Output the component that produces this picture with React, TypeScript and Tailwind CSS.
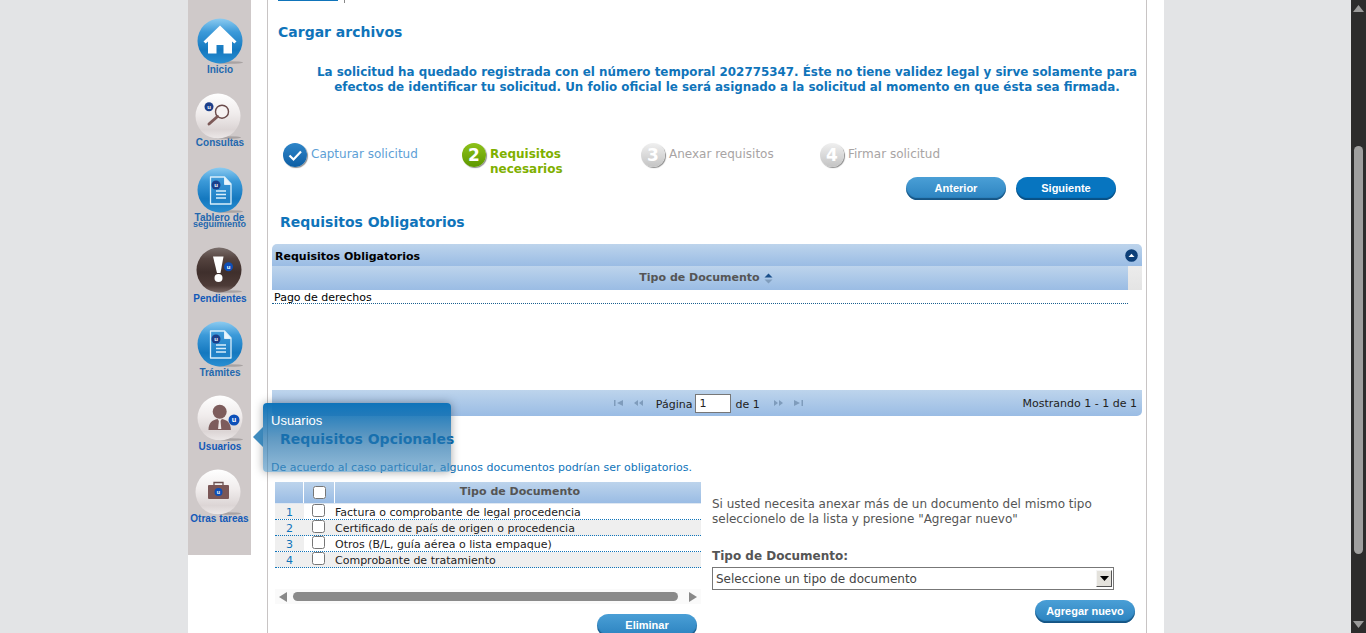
import React from "react";

function Badge({ x, y, r = 5, bright }: { x: number; y: number; r?: number; bright?: boolean }) {
  return (
    <g>
      <circle cx={x} cy={y} r={r} fill={bright ? "#0d4fb8" : "#1c3f8a"} />
      <text x={x} y={y + 2.4} textAnchor="middle" fontSize={r * 1.35} fontWeight="700" fill="#fff" fontFamily="Liberation Sans, sans-serif">u</text>
    </g>
  );
}

function Orb({ id, kind, children }: { id: string; kind: "blue" | "pearl" | "dark"; children?: React.ReactNode }) {
  const stops =
    kind === "blue"
      ? [["0", "#8ccbf0"], ["0.3", "#3c9ad9"], ["0.7", "#1478bf"], ["1", "#2a8fd2"]]
      : kind === "pearl"
      ? [["0", "#ffffff"], ["0.45", "#f0ecec"], ["0.8", "#dcd5d5"], ["1", "#ece8e8"]]
      : [["0", "#7a6e6b"], ["0.25", "#54433f"], ["0.55", "#3f2f2c"], ["0.85", "#4d3b37"], ["1", "#7d6a66"]];
  return (
    <svg width="48" height="48" viewBox="0 0 48 48" className="shrink-0">
      <defs>
        <linearGradient id={id} x1="0" y1="0" x2="0" y2="1">
          {stops.map(([o, c]) => (
            <stop key={o} offset={o} stopColor={c} />
          ))}
        </linearGradient>
      </defs>
      <ellipse cx="33" cy="45.5" rx="14" ry="1.3" fill="#8f8a8a" opacity="0.6" />
      <circle cx="24" cy="24" r="22.5" fill={`url(#${id})`} />
      {children}
    </svg>
  );
}

const Doc = () => (
  <g>
    <path d="M14.500 11h14l6.500 7V38H14.500z" fill="#2f8ed2" fillOpacity="0.4" stroke="#d9eefa" strokeWidth="1.3" strokeLinejoin="round" />
    <path d="M28.500 11v7.500H35" fill="#e8f5fc" stroke="#d9eefa" strokeWidth="1" />
    <path d="M20 25h10M20 28.500h10M20 32h10" stroke="#d9eefa" strokeWidth="1.3" />
    <Badge x={20} y={19} r={4.5} />
  </g>
);

const items: { cls: string; orb: string; label: React.ReactNode; labelCls: string; node: React.ReactNode }[] = [
  {
    cls: "h-[75px]",
    orb: "",
    labelCls: "mt-0 ml-[1px] text-[#2468ae]",
    label: "Inicio",
    node: (
      <Orb id="o1" kind="blue">
        <path d="M24 8.500 7.500 24.500l2.200 2L12 24.400V36.500h8.500V28h7v8.500H36V24.400l2.300 2.100 2.200-2z" fill="#fff" />
      </Orb>
    ),
  },
  {
    cls: "h-[74px]",
    orb: "-translate-x-[2px]",
    labelCls: "-mt-[2px] ml-[1px] text-[#2468ae]",
    label: "Consultas",
    node: (
      <Orb id="o2" kind="pearl">
        <circle cx="28" cy="19.700" r="6.500" fill="#f6f2f2" stroke="#6a4a4a" strokeWidth="1.4" />
        <path d="M23.500 24.500 15 32" stroke="#7d5a58" strokeWidth="3" strokeLinecap="round" />
        <Badge x={15} y={14.700} r={4.5} />
      </Orb>
    ),
  },
  {
    cls: "h-[80px]",
    orb: "",
    labelCls: "mt-0 text-[#2468ae]",
    label: (
      <>
        <span className="block leading-[7px]">Tablero de</span>
        <span className="block leading-[7px] text-[9px]">seguimiento</span>
      </>
    ),
    node: (
      <Orb id="o3" kind="blue">
        <Doc />
      </Orb>
    ),
  },
  {
    cls: "h-[74px]",
    orb: "-translate-x-[1px]",
    labelCls: "mt-0 ml-[1px] text-[#1259b8]",
    label: "Pendientes",
    node: (
      <Orb id="o4" kind="dark">
        <path d="M18 10.500h10.500L25.500 27h-3.500z" fill="#fff" />
        <circle cx="23.500" cy="32" r="4" fill="#fff" />
        <Badge x={33.500} y={20.700} r={4.5} bright />
      </Orb>
    ),
  },
  {
    cls: "h-[74px]",
    orb: "",
    labelCls: "mt-0 ml-[1px] text-[#2468ae]",
    label: "Trámites",
    node: (
      <Orb id="o5" kind="blue">
        <Doc />
      </Orb>
    ),
  },
  {
    cls: "h-[74px]",
    orb: "",
    labelCls: "mt-0 ml-[1px] text-[#1259b8]",
    label: "Usuarios",
    node: (
      <Orb id="o6" kind="pearl">
        <circle cx="23.700" cy="17.700" r="7" fill="#7d5c5c" />
        <path d="M12.500 36c0-7 3.500-10 9-11l2.200 3 2.200-3c5.500 1 9 4 9 11z" fill="#7d5c5c" />
        <path d="M22.900 26.500h1.600l.8 8.500h-3.200z" fill="#efe9e9" />
        <Badge x={38} y={26} r={5.5} bright />
      </Orb>
    ),
  },
  {
    cls: "h-[60px]",
    orb: "-translate-x-[2px]",
    labelCls: "-mt-[2px] text-[#1259b8]",
    label: "Otras tareas",
    node: (
      <Orb id="o7" kind="pearl">
        <path d="M20 17v-2.500h9V17" fill="none" stroke="#6a5050" strokeWidth="1.3" />
        <rect x="14" y="17" width="21" height="14" rx="1" fill="#7a5656" />
        <Badge x={24.500} y={24} r={4} bright />
      </Orb>
    ),
  },
];

function Sidebar() {
  return (
    <div className="w-[63px] h-[555px] shrink-0 bg-[#cfc9c9] pt-[17px] flex flex-col font-['Liberation_Sans',sans-serif]">
      {items.map((it, i) => (
        <div key={i} className={`${it.cls} flex flex-col items-center`}>
          <div className={`h-[48px] ${it.orb}`}>{it.node}</div>
          <div className={`${it.labelCls} text-center text-[10px] leading-[10px] font-bold whitespace-nowrap`}>{it.label}</div>
        </div>
      ))}
    </div>
  );
}

function StepDot({ bg, children }: { bg: string; children: React.ReactNode }) {
  return (
    <div className={`w-[24px] h-[24px] shrink-0 rounded-full ${bg} flex items-center justify-center text-white font-bold text-[17px] leading-none shadow-[1px_1px_1px_rgba(0,0,0,0.45)]`}>
      {children}
    </div>
  );
}

function Steps() {
  return (
    <div className="h-[34px] pl-[15px] flex">
      <div className="w-[179px] flex gap-[4px]">
        <StepDot bg="bg-gradient-to-b from-[#2f86c9] to-[#0b5ea4]">
          <svg width="16" height="16" viewBox="0 0 16 16">
            <path d="M2.500 8.500 6.500 12.500 14 4.500" fill="none" stroke="#fff" strokeWidth="2.200" />
          </svg>
        </StepDot>
        <span className="text-[12px] leading-[16px] pt-[3px] text-[#5e9fd6]">Capturar solicitud</span>
      </div>
      <div className="w-[179px] flex gap-[4px]">
        <StepDot bg="bg-gradient-to-b from-[#8ec21a] to-[#5e9800]">2</StepDot>
        <span className="text-[12px] leading-[15px] pt-[4px] font-bold text-[#7fb000]">Requisitos<br />necesarios</span>
      </div>
      <div className="w-[179px] flex gap-[4px]">
        <StepDot bg="bg-gradient-to-b from-[#f0f0f0] to-[#c4c4c4]">3</StepDot>
        <span className="text-[12px] leading-[16px] pt-[3px] text-[#a8a4a4]">Anexar requisitos</span>
      </div>
      <div className="w-[179px] flex gap-[4px]">
        <StepDot bg="bg-gradient-to-b from-[#f0f0f0] to-[#c4c4c4]">4</StepDot>
        <span className="text-[12px] leading-[16px] pt-[3px] text-[#a8a4a4]">Firmar solicitud</span>
      </div>
    </div>
  );
}

function Pill({ dark, children }: { dark?: boolean; children: React.ReactNode }) {
  return (
    <div
      className={`w-[100px] h-[23px] shrink-0 rounded-full flex items-center justify-center text-white font-bold text-[11px] font-['Liberation_Sans',sans-serif] shadow-[inset_0_-2px_1px_rgba(10,60,100,0.65)] ${
        dark ? "bg-[#0775c0]" : "bg-gradient-to-b from-[#4a9fd6] to-[#2a82bf]"
      }`}
    >
      {children}
    </div>
  );
}

function PagerIcon({ flip, double }: { flip?: boolean; double?: boolean }) {
  return (
    <svg width="12" height="8" viewBox="0 0 12 8" className={flip ? "-scale-x-100" : ""}>
      {double ? (
        <path d="M1 4l4-3v6zM6 4l4-3v6z" fill="#7f9cbc" />
      ) : (
        <path d="M1 1h1.500v6H1zM4 4l6-3v6z" fill="#7f9cbc" />
      )}
    </svg>
  );
}

function RequiredGrid() {
  return (
    <div className="mx-[4px] mt-[12px] h-[172px] flex flex-col">
      <div className="h-[22px] rounded-t-[5px] bg-gradient-to-b from-[#bdd4ec] to-[#9abce4] flex items-center justify-between pl-[3px] pr-[4px]">
        <span className="mt-[4px] font-bold text-[11px] text-black">Requisitos Obligatorios</span>
        <svg width="13" height="13" viewBox="0 0 13 13">
          <circle cx="6.500" cy="6.500" r="6.300" fill="#0d3f78" />
          <path d="M3.500 8h6L6.500 4.800z" fill="#fff" />
        </svg>
      </div>
      <div className="h-[24px] flex">
        <div className="flex-1 pl-[12px] bg-gradient-to-b from-[#bdd4ec] to-[#9abce4] flex items-center justify-center gap-[4px] font-bold text-[11px] text-[#555]">
          <span>Tipo de Documento</span>
          <svg width="9" height="11" viewBox="0 0 9 11">
            <path d="M.5 4.500h8L4.500.5z" fill="#1a4f8a" />
            <path d="M.5 6.500h8l-4 4z" fill="#7f9cbc" />
          </svg>
        </div>
        <div className="w-[14px] bg-gradient-to-b from-[#ececec] to-[#e4e4e4]" />
      </div>
      <div className="h-[100px]">
        <div className="mr-[14px] h-[14px] pt-[1px] leading-[13px] pl-[2px] border-b border-dotted border-[#1a5f8f] text-[11px] text-black">Pago de derechos</div>
      </div>
      <div className="h-[26px] rounded-b-[5px] bg-gradient-to-b from-[#bdd4ec] to-[#9abce4] flex items-center text-[11px] text-[#222] pr-[5px]">
        <div className="flex-1 flex items-center justify-center pl-[72px] gap-[8px]">
          <PagerIcon />
          <PagerIcon double />
          <span className="ml-[3px] mt-[4px]">Página</span>
          <div className="-ml-[5px] w-[36px] h-[19px] bg-white border border-[#777] pl-[3px] leading-[18px]">1</div>
          <span className="-ml-[4px] mr-[4px] mt-[4px]">de 1</span>
          <PagerIcon flip double />
          <PagerIcon flip />
        </div>
        <span className="-ml-[50px] mt-[2px]">Mostrando 1 - 1 de 1</span>
      </div>
    </div>
  );
}

const docs = ["Factura o comprobante de legal procedencia", "Certificado de país de origen o procedencia", "Otros (B/L, guía aérea o lista empaque)", "Comprobante de tratamiento"];

function OptionalTable() {
  return (
    <div className="ml-[7px] w-[426px] shrink-0">
      <div className="h-[22px] flex gap-[1px] bg-white font-bold text-[11px] text-[#555] border-b border-[#dfe8f2]">
        <div className="w-[28px] bg-gradient-to-b from-[#bdd4ec] to-[#9abce4]" />
        <div className="w-[30px] bg-gradient-to-b from-[#bdd4ec] to-[#9abce4] flex items-center justify-center">
          <input type="checkbox" className="m-0 w-[13px] h-[13px]" />
        </div>
        <div className="flex-1 pl-[4px] bg-gradient-to-b from-[#bdd4ec] to-[#9abce4] flex items-center justify-center">Tipo de Documento</div>
      </div>
      {docs.map((d, i) => (
        <div key={d} className={`h-[16px] flex items-center border-b border-dotted border-[#0f74ba] text-[11px] text-[#222] ${i % 2 ? "bg-[#efefef]" : "bg-white"}`}>
          <div className="w-[29px] h-full bg-[#efefef] text-center text-[#0f74ba] leading-[18px]">{i + 1}</div>
          <div className="w-[30px] h-full flex justify-center pr-[2px]">
            <input type="checkbox" className="m-0 w-[13px] h-[13px]" />
          </div>
          <div className="mt-[2px] leading-[16px] pl-[1px]">{d}</div>
        </div>
      ))}
      <div className="mt-[21px] h-[15px] bg-[#fafafa] flex items-center px-[4px] gap-[5px]">
        <svg width="9" height="10" viewBox="0 0 9 10"><path d="M8 0v10L0 5z" fill="#888" /></svg>
        <div className="flex-1 h-[9px] mr-[5px] rounded-full bg-[#8a8a8a]" />
        <svg width="9" height="10" viewBox="0 0 9 10"><path d="M1 0v10l8-5z" fill="#888" /></svg>
      </div>
      <div className="mt-[10px] flex justify-end pr-[4px]">
        <Pill>Eliminar</Pill>
      </div>
    </div>
  );
}

function RightPanel() {
  return (
    <div className="ml-[11px] w-[423px] pt-[15px] text-[12px] text-[#555]">
      <div className="leading-[15px]">
        Si usted necesita anexar más de un documento del mismo tipo
        <br />
        seleccionelo de la lista y presione "Agregar nuevo"
      </div>
      <div className="mt-[21px] font-bold text-[12px] leading-[16px]">Tipo de Documento:</div>
      <div className="mt-[3px] w-[402px] h-[23px] border border-[#777] bg-white flex items-center justify-between pl-[3px] pr-[1px] text-[12px] text-[#444]">
        <span>Seleccione un tipo de documento</span>
        <div className="w-[16px] h-[17px] bg-[#e4e2dc] border border-t-[#f5f5f5] border-l-[#f5f5f5] border-r-[#555] border-b-[#555] flex items-center justify-center">
          <svg width="9" height="5" viewBox="0 0 9 5"><path d="M0 0h9L4.500 5z" fill="#000" /></svg>
        </div>
      </div>
      <div className="mt-[10px] w-[423px] flex justify-end">
        <Pill>Agregar nuevo</Pill>
      </div>
    </div>
  );
}

function Tooltip() {
  return (
    <div className="absolute left-[75px] top-[403px] w-[188px] h-[69px] rounded-[4px] bg-gradient-to-b from-[#0f74ba] via-[#1a6da8]/70 to-[#4a90c0]/60 shadow-[0_0_10px_rgba(0,0,0,0.35)] pl-[8px] pt-[10px] text-[13px] leading-[16px] text-white font-['Liberation_Sans',sans-serif]">
      Usuarios
      <div className="absolute -left-[10px] top-[24px] w-0 h-0 border-y-[10px] border-y-transparent border-r-[10px] border-r-[#1f78b4]/85" />
    </div>
  );
}

export default function App() {
  return (
    <div className="relative w-full h-[633px] overflow-hidden bg-[#e3e4e6] flex font-['DejaVu_Sans',sans-serif]">
      <div className="relative ml-[188px] w-[976px] h-[633px] bg-white flex shrink-0">
        <Sidebar />
        <div className="ml-[16px] w-[880px] h-[760px] border-x border-[#c8c4c4] flex flex-col">
          <div className="h-[3px] pl-[10px] flex gap-[6px]">
            <div className="w-[60px] h-[1px] bg-[#0f74ba]" />
            <div className="w-[1px] h-[3px] bg-[#888]" />
          </div>
          <div className="mt-[19px] ml-[10px] h-[20px] font-bold text-[14px] leading-[20px] text-[#0f74ba]">Cargar archivos</div>
          <div className="mt-[23px] pl-[40px] h-[30px] text-center font-bold text-[11.9px] leading-[15px] text-[#0f74ba] whitespace-nowrap">
            La solicitud ha quedado registrada con el número temporal 202775347. Éste no tiene validez legal y sirve solamente para
            <br />
            efectos de identificar tu solicitud. Un folio oficial le será asignado a la solicitud al momento en que ésta sea firmada.
          </div>
          <div className="h-[48px]" />
          <Steps />
          <div className="h-[23px] flex justify-end gap-[10px] pr-[30px]">
            <Pill>Anterior</Pill>
            <Pill dark>Siguiente</Pill>
          </div>
          <div className="mt-[12px] ml-[12px] h-[20px] font-bold text-[14px] leading-[20px] text-[#0f74ba]">Requisitos Obligatorios</div>
          <RequiredGrid />
          <div className="mt-[13px] ml-[12px] h-[20px] font-bold text-[14px] leading-[20px] text-[#0f74ba]">Requisitos Opcionales</div>
          <div className="mt-[12px] ml-[3px] h-[14px] text-[11px] leading-[14px] text-[#0f74ba]">De acuerdo al caso particular, algunos documentos podrían ser obligatorios.</div>
          <div className="flex mt-[7px]">
            <OptionalTable />
            <RightPanel />
          </div>
        </div>
        <Tooltip />
      </div>
      <div className="ml-auto w-[15px] h-[633px] shrink-0 bg-[#2c2c2c] flex flex-col items-center">
        <svg width="11" height="7" viewBox="0 0 11 7" className="mt-[5px]"><path d="M0 7 5.500 0 11 7z" fill="#9a9a9a" /></svg>
        <div className="mt-[134px] w-[9px] h-[408px] rounded-[5px] bg-[#9f9f9f]" />
        <svg width="11" height="7" viewBox="0 0 11 7" className="mt-auto mb-[5px]"><path d="M0 0h11L5.500 7z" fill="#9a9a9a" /></svg>
      </div>
    </div>
  );
}
